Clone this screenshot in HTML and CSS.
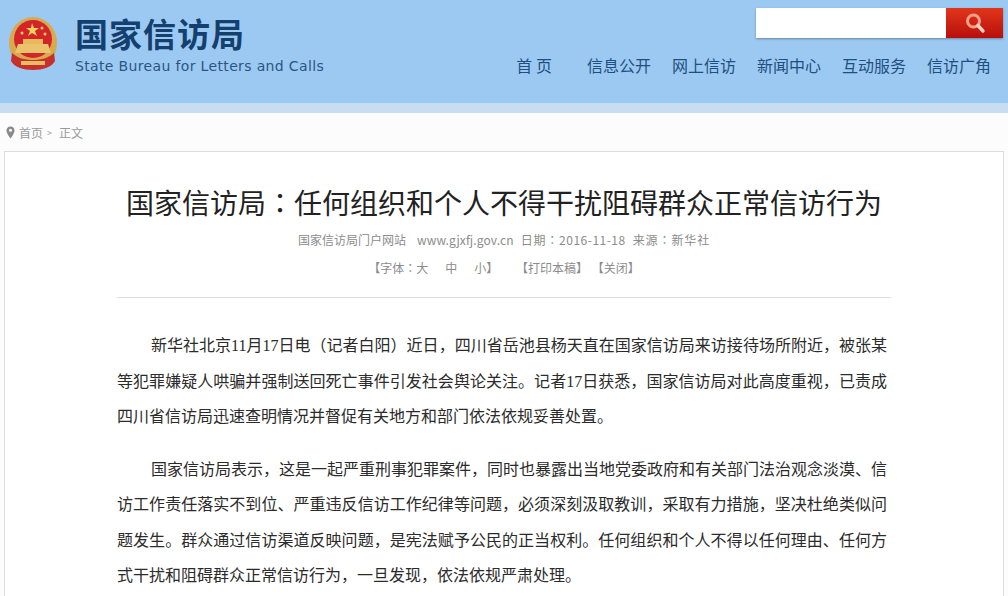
FILE: index.html

```html
<!DOCTYPE html>
<html lang="zh-CN">
<head>
  <meta charset="UTF-8" />
  <meta name="viewport" content="width=device-width, initial-scale=1.0"/>
  <title>国家信访局</title>
  <link rel="stylesheet" href="styles.css">
</head>
<body>
  <div class="header">
    <div class="logo">
      <svg class="emblem" width="52" height="56" viewBox="0 0 52 56">
        <ellipse cx="26" cy="27" rx="24" ry="26" fill="#d9a94e"/>
        <ellipse cx="26" cy="23" rx="19" ry="19" fill="#d3242a"/>
        <path d="M25 7l2 5 5 0-4 3 2 5-5-3-4 3 2-5-4-3 5 0z" fill="#f1d35c"/>
        <circle cx="15" cy="17" r="1.500" fill="#f1d35c"/>
        <circle cx="35" cy="12" r="1.500" fill="#f1d35c"/>
        <circle cx="38" cy="18" r="1.500" fill="#f1d35c"/>
        <path d="M11 28h30l3 9H8z" fill="#e9c46c"/>
        <path d="M16 23h20v5H16z" fill="#e8b95a"/>
        <path d="M5 37c6 5 12 7 21 7s15-2 21-7l1 8c-3 6-12 9-22 9S7 51 4 45z" fill="#c62f2c"/>
        <path d="M14 45h24v4H14z" fill="#e6bd63"/>
      </svg>
      <div class="logo-text">
        <div class="logo-cn">国家信访局</div>
        <div class="logo-en">State Bureau for Letters and Calls</div>
      </div>
    </div>
    <div class="header-right">
      <div class="search">
        <div class="search-input"></div>
        <div class="search-btn">
          <svg width="24" height="24" viewBox="0 0 24 24">
            <circle cx="10.500" cy="10" r="6" fill="none" stroke="#f6a08c" stroke-width="3"/>
            <path d="M15 14.500l5 5.500" stroke="#f8d0c4" stroke-width="3.400" stroke-linecap="round"/>
          </svg>
        </div>
      </div>
      <div class="nav">
        <a class="home">首 页</a>
        <a>信息公开</a>
        <a>网上信访</a>
        <a>新闻中心</a>
        <a>互动服务</a>
        <a>信访广角</a>
      </div>
    </div>
  </div>
  <div class="strip"></div>

  <div class="crumb">
    <svg width="9" height="13" viewBox="0 0 9 13">
      <path d="M4.500 0.500C2 0.500 0.500 2.300 0.500 4.500c0 3 4 8 4 8s4-5 4-8C8.500 2.300 7 0.500 4.500 0.500z" fill="#8a8a8a"/>
      <circle cx="4.500" cy="4.300" r="1.500" fill="#fff"/>
    </svg>
    <span>首页</span><span class="sep">&gt;</span><span>正文</span>
  </div>

  <div class="panel">
    <h1>国家信访局<span class="colon" lang="zh-TW">：</span>任何组织和个人不得干扰阻碍群众正常信访行为</h1>
    <div class="meta">
      <span>国家信访局门户网站</span>
      <span class="url">www.gjxfj.gov.cn</span>
      <span class="date"><span class="date-label">日期<span class="colon" lang="zh-TW">：</span></span><span class="num">2016-11-18</span></span>
      <span class="source">来源<span class="colon" lang="zh-TW">：</span>新华社</span>
    </div>
    <div class="tools">
      <span class="size">【字体<span class="colon" lang="zh-TW">：</span>大<i>中</i><i>小</i>】</span>
      <span class="print">【打印本稿】</span>
      <span class="close">【关闭】</span>
    </div>
    <div class="article">
      <p>新华社北京11月17日电（记者白阳）近日，四川省岳池县杨天直在国家信访局来访接待场所附近，被张某等犯罪嫌疑人哄骗并强制送回死亡事件引发社会舆论关注。记者17日获悉，国家信访局对此高度重视，已责成四川省信访局迅速查明情况并督促有关地方和部门依法依规妥善处置。</p>
      <p>国家信访局表示，这是一起严重刑事犯罪案件，同时也暴露出当地党委政府和有关部门法治观念淡漠、信访工作责任落实不到位、严重违反信访工作纪律等问题，必须深刻汲取教训，采取有力措施，坚决杜绝类似问题发生。群众通过信访渠道反映问题，是宪法赋予公民的正当权利。任何组织和个人不得以任何理由、任何方式干扰和阻碍群众正常信访行为，一旦发现，依法依规严肃处理。</p>
    </div>
  </div>
</body>
</html>
```

FILE: styles.css

```css
* {
  box-sizing: border-box;
}
html, body {
  height: 596px;
  overflow: hidden;
}
body {
  margin: 0;
  background-color: #fdfcfc;
  color: #222;
  font-family: "Noto Sans CJK SC", "Liberation Sans", sans-serif;
}
.header {
  display: flex;
  justify-content: space-between;
  height: 103px;
  padding: 8px 5px 0 7px;
  background-color: #9cc9f1;
}
.logo {
  display: flex;
  gap: 16px;
}
.emblem {
  margin-top: 8px;
}
.logo-cn {
  margin-top: 3px;
  color: #14406f;
  font-size: 33px;
  font-weight: 700;
  line-height: 44px;
  letter-spacing: 1px;
}
.logo-en {
  margin-top: 2px;
  color: #2a5684;
  font-family: "DejaVu Sans", sans-serif;
  font-size: 14px;
  line-height: 18px;
  letter-spacing: 0.35px;
}
.header-right {
  display: flex;
  flex-direction: column;
  align-items: flex-end;
}
.search {
  display: flex;
  height: 30px;
  box-shadow: 0 1px 2px rgba(70, 90, 110, 0.6);
}
.search-input {
  width: 190px;
  background-color: #fff;
}
.search-btn {
  display: flex;
  align-items: center;
  justify-content: center;
  width: 57px;
  background: linear-gradient(#e2361a, #b80f0c);
}
.nav {
  display: flex;
  gap: 21px;
  margin-top: 10px;
  padding-right: 12px;
  color: #1f4f80;
  font-size: 16px;
  line-height: 34px;
}
.nav .home {
  margin-right: 14px;
}
.strip {
  height: 10px;
  background-color: #c6ddf2;
}
.crumb {
  display: flex;
  align-items: center;
  gap: 4px;
  height: 38px;
  padding-left: 6px;
  color: #9a9a9a;
  font-size: 12px;
}
.crumb .sep {
  margin-right: 3px;
  font-size: 9px;
}
.panel {
  height: 460px;
  margin: 0 4px;
  padding-top: 28px;
  background-color: #fff;
  border: 1px solid #dcdcdc;
  text-align: center;
}
h1 {
  margin: 0;
  color: #222;
  font-size: 28px;
  font-weight: 400;
  line-height: 44px;
}
.colon {
  font-family: "Noto Sans CJK TC", sans-serif;
}
.meta {
  display: flex;
  justify-content: center;
  margin-top: 7px;
  color: #8c8c8c;
  font-size: 12px;
  line-height: 18px;
}
.meta .url {
  margin-left: 11px;
  letter-spacing: 0.12px;
}
.meta .date {
  margin-left: 7px;
}
.meta .date-label {
  letter-spacing: 0.8px;
}
.meta .num {
  letter-spacing: 0.5px;
}
.meta .source {
  margin-left: 7px;
  letter-spacing: 0.9px;
}
.tools {
  margin: 10px 112px 0;
  padding-bottom: 20px;
  border-bottom: 1px solid #dedede;
  color: #8c8c8c;
  font-size: 12px;
  line-height: 18px;
}
.tools i {
  margin-left: 17px;
  font-style: normal;
}
.tools .print {
  margin-left: 15px;
}
.tools .close {
  margin-left: 1px;
}
.article {
  margin: 30px 116px 0 112px;
  color: #2b2b2b;
  font-family: "Liberation Serif", "Noto Sans CJK SC", serif;
  font-size: 16px;
  line-height: 35.5px;
  text-align: justify;
}
.article p {
  margin: 0 0 17px;
  text-indent: 34px;
}
```
